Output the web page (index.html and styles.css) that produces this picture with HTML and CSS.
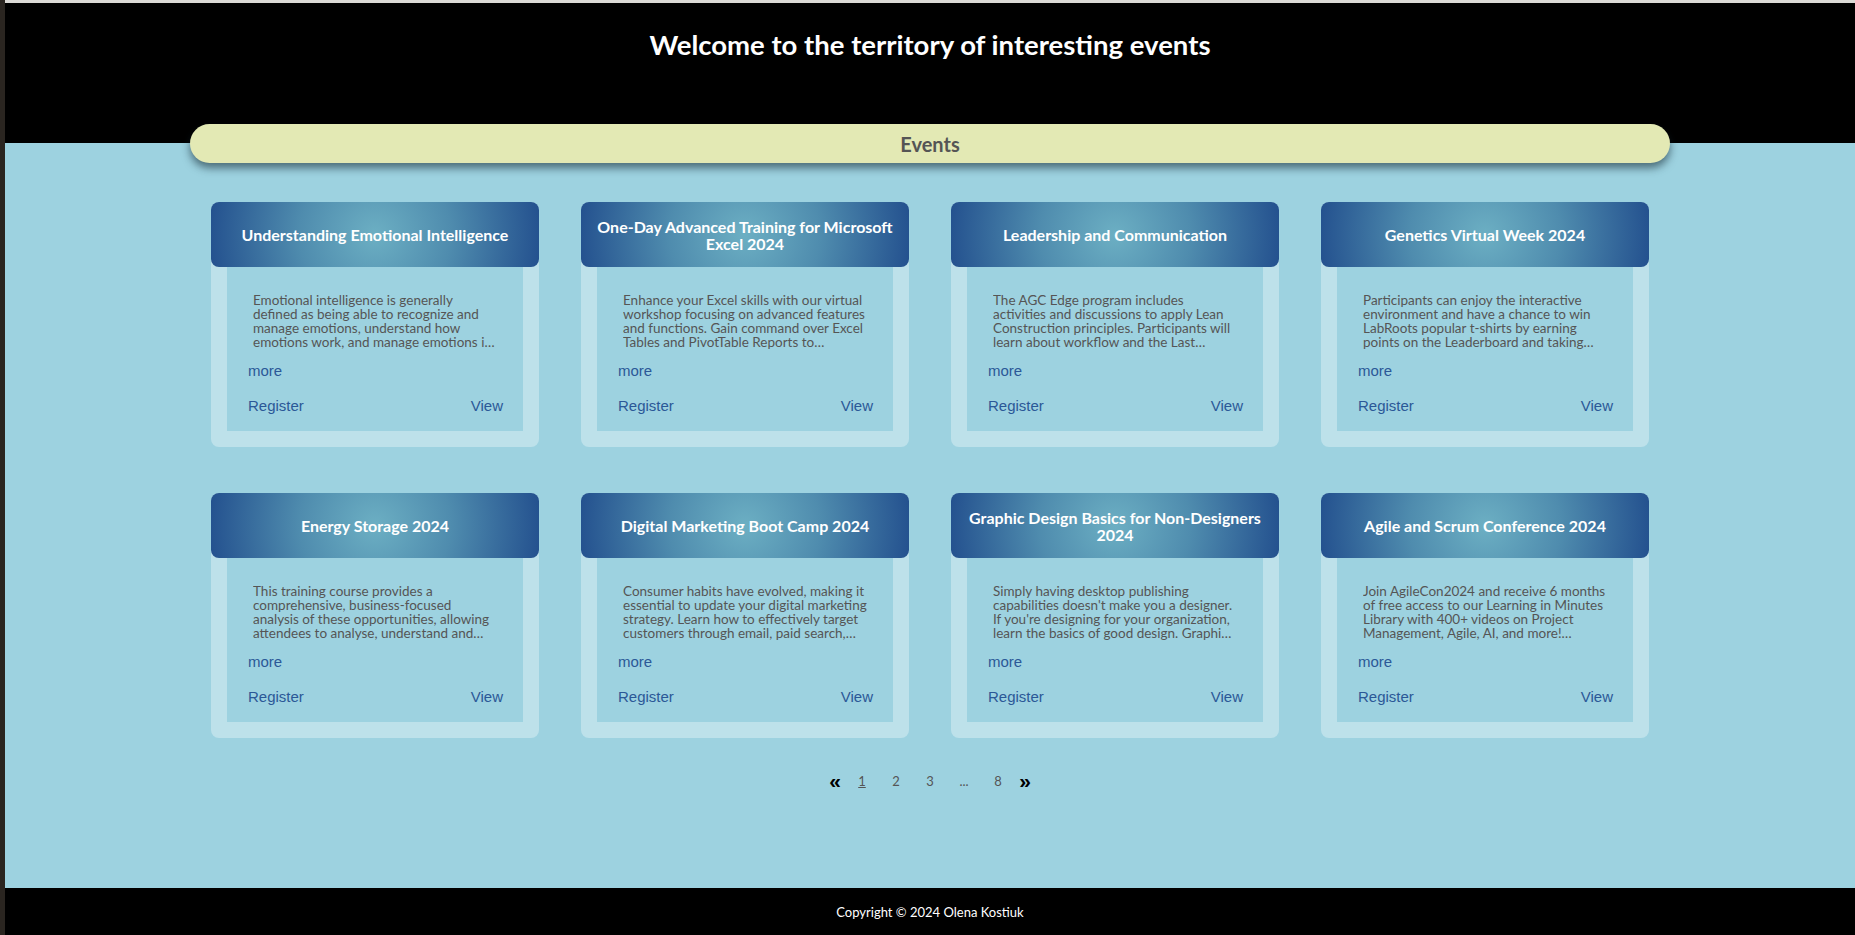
FILE: index.html
```html
<!DOCTYPE html>
<html lang="en">
<head>
<meta charset="utf-8">
<title>Events</title>
<link rel="stylesheet" href="styles.css">
</head>
<body>
<div class="page">
  <div class="topline"></div>
  <header class="site-header">
    <h1 class="site-title">Welcome to the territory of interesting events</h1>
  </header>
  <main class="main">
    <div class="section-bar"><h2 class="section-title">Events</h2></div>
    <div class="grid">
      <article class="card">
        <div class="card-head"><h3 class="card-title">Understanding Emotional Intelligence</h3></div>
        <div class="card-body">
          <p class="desc">Emotional intelligence is generally defined as being able to recognize and manage emotions, understand how emotions work, and manage emotions in relationships with others.</p>
          <a class="more" href="#">more</a>
          <div class="actions"><a href="#">Register</a><a href="#">View</a></div>
        </div>
      </article>
      <article class="card">
        <div class="card-head"><h3 class="card-title">One-Day Advanced Training for Microsoft Excel 2024</h3></div>
        <div class="card-body">
          <p class="desc">Enhance your Excel skills with our virtual workshop focusing on advanced features and functions. Gain command over Excel Tables and PivotTable Reports to organize and analyze your data.</p>
          <a class="more" href="#">more</a>
          <div class="actions"><a href="#">Register</a><a href="#">View</a></div>
        </div>
      </article>
      <article class="card">
        <div class="card-head"><h3 class="card-title">Leadership and Communication</h3></div>
        <div class="card-body">
          <p class="desc">The AGC Edge program includes activities and discussions to apply Lean Construction principles. Participants will learn about workflow and the Last Planner System.</p>
          <a class="more" href="#">more</a>
          <div class="actions"><a href="#">Register</a><a href="#">View</a></div>
        </div>
      </article>
      <article class="card">
        <div class="card-head"><h3 class="card-title">Genetics Virtual Week 2024</h3></div>
        <div class="card-body">
          <p class="desc">Participants can enjoy the interactive environment and have a chance to win LabRoots popular t-shirts by earning points on the Leaderboard and taking part in activities.</p>
          <a class="more" href="#">more</a>
          <div class="actions"><a href="#">Register</a><a href="#">View</a></div>
        </div>
      </article>
      <article class="card">
        <div class="card-head"><h3 class="card-title">Energy Storage 2024</h3></div>
        <div class="card-body">
          <p class="desc">This training course provides a comprehensive, business-focused analysis of these opportunities, allowing attendees to analyse, understand and evaluate energy storage.</p>
          <a class="more" href="#">more</a>
          <div class="actions"><a href="#">Register</a><a href="#">View</a></div>
        </div>
      </article>
      <article class="card">
        <div class="card-head"><h3 class="card-title">Digital Marketing Boot Camp 2024</h3></div>
        <div class="card-body">
          <p class="desc">Consumer habits have evolved, making it essential to update your digital marketing strategy. Learn how to effectively target customers through email, paid search, and social media.</p>
          <a class="more" href="#">more</a>
          <div class="actions"><a href="#">Register</a><a href="#">View</a></div>
        </div>
      </article>
      <article class="card">
        <div class="card-head"><h3 class="card-title">Graphic Design Basics for Non-Designers 2024</h3></div>
        <div class="card-body">
          <p class="desc">Simply having desktop publishing capabilities doesn't make you a designer. If you're designing for your organization, learn the basics of good design. Graphic design is everywhere.</p>
          <a class="more" href="#">more</a>
          <div class="actions"><a href="#">Register</a><a href="#">View</a></div>
        </div>
      </article>
      <article class="card">
        <div class="card-head"><h3 class="card-title">Agile and Scrum Conference 2024</h3></div>
        <div class="card-body">
          <p class="desc">Join AgileCon2024 and receive 6 months of free access to our Learning in Minutes Library with 400+ videos on Project Management, Agile, AI, and more! Register today.</p>
          <a class="more" href="#">more</a>
          <div class="actions"><a href="#">Register</a><a href="#">View</a></div>
        </div>
      </article>
    </div>
    <nav class="pager">
      <a class="arrow" href="#">&laquo;</a>
      <a class="num current" href="#">1</a>
      <a class="num" href="#">2</a>
      <a class="num" href="#">3</a>
      <span class="num">...</span>
      <a class="num" href="#">8</a>
      <a class="arrow" href="#">&raquo;</a>
    </nav>
  </main>
  <footer class="site-footer">Copyright © 2024 Olena Kostiuk</footer>
</div>
</body>
</html>
```
FILE: styles.css
```css
html {
  background: #2a2520;
}
body {
  margin: 0;
  height: 100vh;
  overflow: hidden;
  font-family: Lato, "Open Sans", sans-serif;
}
.page {
  margin-left: 5px;
  height: 100%;
  display: flex;
  flex-direction: column;
  background: #9dd2e0;
}
.topline {
  height: 3px;
  background: #dcdad6;
}
.site-header {
  background: #000;
  height: 140px;
  box-sizing: border-box;
  padding-top: 27px;
}
.site-title {
  margin: 0;
  text-align: center;
  color: #fff;
  font-size: 27.5px;
  line-height: 30px;
  font-weight: 700;
}
.main {
  flex: 1;
  background: #9dd2e0;
  display: flex;
  flex-direction: column;
  align-items: center;
}
.section-bar {
  width: 1480px;
  height: 39px;
  margin-top: -19px;
  background: #e3e9b4;
  border-radius: 20px;
  box-shadow: 0 5px 8px rgba(20, 40, 50, 0.6);
  display: flex;
  align-items: center;
  justify-content: center;
}
.section-title {
  margin: 0;
  font-size: 20px;
  font-weight: 700;
  color: #555;
}
.grid {
  margin-top: 39px;
  display: grid;
  grid-template-columns: repeat(4, 328px);
  column-gap: 42px;
  row-gap: 46px;
}
.card {
  background: #bde1ea;
  border-radius: 8px;
  padding: 0 16px 16px;
  display: flex;
  flex-direction: column;
}
.card-head {
  margin: 0 -16px;
  height: 65px;
  border-radius: 8px;
  background: radial-gradient(circle 168px at 50% 50%, #6cafc3 0%, #4f8cae 45%, #23508e 100%);
  display: flex;
  align-items: center;
  justify-content: center;
  padding: 0 14px;
}
.card-title {
  margin: 0;
  color: #fff;
  font-size: 16px;
  line-height: 17px;
  font-weight: 700;
  text-align: center;
}
.card-body {
  background: #9dd2e0;
  padding: 26px 20px 16px 21px;
  display: flex;
  flex-direction: column;
}
.desc {
  margin: 0 0 0 5px;
  width: 244px;
  height: 56px;
  font-size: 13.5px;
  line-height: 14px;
  color: #555;
  display: -webkit-box;
  -webkit-box-orient: vertical;
  -webkit-line-clamp: 4;
  overflow: hidden;
}
.more,
.actions a {
  font-family: "Liberation Sans", Arial, sans-serif;
  font-size: 15px;
  line-height: 18px;
  color: #2b5897;
  text-decoration: none;
}
.more {
  margin-top: 13px;
  align-self: flex-start;
}
.actions {
  margin-top: 17px;
  display: flex;
  justify-content: space-between;
}
.pager {
  margin-top: 33px;
  display: flex;
  align-items: center;
  height: 20px;
}
.pager .arrow {
  margin: 0 4px;
  width: 12px;
  font-family: "Liberation Sans", sans-serif;
  font-weight: 700;
  font-size: 21px;
  line-height: 20px;
  color: #000;
  text-decoration: none;
  text-align: center;
}
.pager .num {
  width: 34px;
  text-align: center;
  font-size: 13px;
  color: #555;
  text-decoration: none;
}
.pager .num.current {
  text-decoration: underline;
}
.site-footer {
  height: 47px;
  background: #000;
  color: #fff;
  font-size: 13px;
  display: flex;
  align-items: center;
  justify-content: center;
}
```
